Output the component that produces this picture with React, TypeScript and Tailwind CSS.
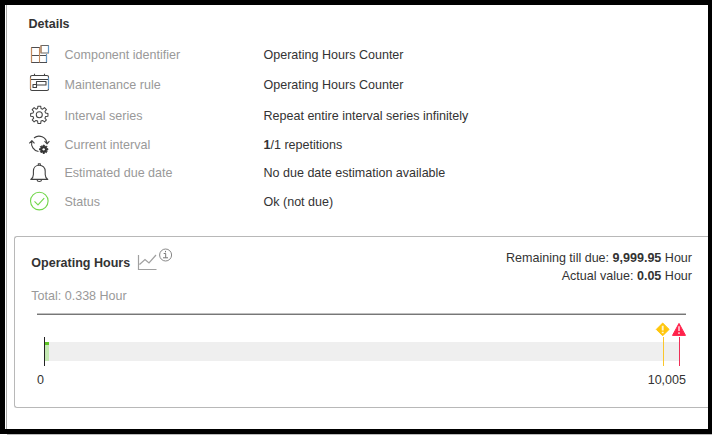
import type { ReactNode } from 'react';

const gearPath =
  'M8.2 3.3 8.5.8h3l.3 2.5 1.7.7 2-1.6 2.1 2.1L16 6.5l.7 1.7 2.5.3v3l-2.5.3-.7 1.7 1.6 2-2.1 2.1-2-1.6-1.7.7-.3 2.5h-3l-.3-2.5-1.7-.7-2 1.6-2.1-2.1L4 13.5l-.7-1.7-2.5-.3v-3l2.5-.3L4 6.5l-1.6-2 2.1-2.1 2 1.6z';

function Icon({ children, color = '#424242' }: { children: ReactNode; color?: string }) {
  return (
    <svg width="20" height="20" viewBox="0 0 20 20" fill="none" stroke={color} strokeWidth="1.1" strokeLinejoin="round" className="shrink-0 overflow-visible">
      {children}
    </svg>
  );
}

const ComponentIcon = () => (
  <Icon>
    <path d="M10 2.500H1.500v15h15V9.500M1.500 10.500h15" stroke="#4c4c50" />
    <path d="M9.500 2.500v15" stroke="#c58a5c" />
    <path d="M1.500 2.500v15" stroke="#c58a5c" />
    <path d="M16.500 9v8" stroke="#6198c8" />
    <path d="M11 .5h7.500v7.500H11z" fill="#fff" stroke="#666" />
    <path d="M11 .5V8" stroke="#c58a5c" />
    <path d="M18.500.5V8" stroke="#6198c8" />
  </Icon>
);

const CalendarIcon = () => (
  <Icon>
    <rect x="0.500" y="2.500" width="18" height="15" rx="1.500" />
    <path d="M.5 6.500h18M4.500.8v1.700M14.500.8v1.700M3 11.500h3.500v3H3zM6.500 11.500V8.500H16v3.500H6.500" />
    <path d="M.5 4.500v11.500" stroke="#c58a5c" />
    <path d="M18.500 4.500v11.500" stroke="#6198c8" />
  </Icon>
);

const GearIcon = () => (
  <Icon>
    <g transform="translate(-.1 .4) scale(.94)">
      <path d={gearPath} />
      <circle cx="10" cy="10" r="3.200" />
    </g>
  </Icon>
);

const CycleIcon = () => (
  <Icon>
    <path d="M4 3A8 8 0 0 1 17 8.500M14.500 6.200l2.600 2.700 2.300-2.700M8.500 16.500A8 8 0 0 1 1.900 6.300M-.7 8.300l2.600-2.600 2.600 2.600" />
    <g transform="translate(9.200 9.800) scale(.45)" stroke="#333">
      <path d={gearPath} fill="#333" strokeWidth="2" />
      <circle cx="10" cy="10" r="2.600" fill="#fff" stroke="none" />
    </g>
  </Icon>
);

const BellIcon = () => (
  <Icon>
    <path d="M.8 16.400c2-1.500 2.600-2.400 2.600-5V8.200c0-3.500 2.400-6 5.900-6s5.900 2.500 5.900 6v3.200c0 2.600.6 3.500 2.600 5z" />
    <path d="M8.300 2.200V.8h2v1.400M7 16.700c.2 2.400 4.400 2.400 4.600 0" />
  </Icon>
);

const CheckIcon = () => (
  <Icon color="#72d64b">
    <circle cx="9.300" cy="10.100" r="8.800" />
    <path d="m4.500 10.400 3.500 3.500 6.200-6.800" />
  </Icon>
);

type Row = { icon: ReactNode; label: string; value: ReactNode; box: string; nudge: string };

const rows: Row[] = [
  { icon: <ComponentIcon />, label: 'Component identifier', value: 'Operating Hours Counter', box: 'h-[30px]', nudge: 'mb-0' },
  { icon: <CalendarIcon />, label: 'Maintenance rule', value: 'Operating Hours Counter', box: 'h-[30px]', nudge: 'mb-[4px]' },
  { icon: <GearIcon />, label: 'Interval series', value: 'Repeat entire interval series infinitely', box: 'h-[31px]', nudge: 'mb-[1px]' },
  { icon: <CycleIcon />, label: 'Current interval', value: <><b>1</b>/1 repetitions</>, box: 'h-[28px]', nudge: 'mb-0' },
  { icon: <BellIcon />, label: 'Estimated due date', value: 'No due date estimation available', box: 'h-[28px]', nudge: 'mb-0' },
  { icon: <CheckIcon />, label: 'Status', value: 'Ok (not due)', box: 'h-[30px]', nudge: 'mb-[2px]' },
];

function Details() {
  return (
    <section className="pl-[21.5px] pt-[10px]">
      <h2 className="h-[25px] leading-[18px] font-bold">Details</h2>
      {rows.map((r) => (
        <div key={r.label} className={`flex items-center ${r.box}`}>
          <div className={`w-[36px] pl-[1.5px] ${r.nudge}`}>{r.icon}</div>
          <div className="w-[199px] text-[#999]">{r.label}</div>
          <div>{r.value}</div>
        </div>
      ))}
    </section>
  );
}

function Gauge() {
  return (
    <div className="relative ml-[22px] h-[74px] w-[649px] border-t border-[#c0c0c0]">
      <div className="h-px bg-[#777]" />
      <div className="absolute top-[28px] left-[7px] h-[19px] w-[635px] bg-[#efefef]">
        <div className="h-full w-[5px] border-t-[3px] border-[#5cc323] bg-[#c5e9b4]" />
      </div>
      <div className="absolute top-[23px] left-[7px] h-[29px] w-px bg-[#222]" />
      <div className="absolute top-[23px] left-[626px] h-[29px] w-px bg-[#fac62c]" />
      <div className="absolute top-[23px] left-[642px] h-[29px] w-px bg-[#ee3058]" />
      <svg className="absolute top-[8px] left-[618px]" width="32" height="16" viewBox="0 0 32 16">
        <path d="m7.700 1 6.400 6.400-6.400 6.400-6.400-6.400z" fill="#ffc60a" stroke="#ffc60a" strokeLinejoin="round" />
        <path d="M7.700 3.800v4.700M7.700 9.700v1.600" stroke="#fff4d0" strokeWidth="1.900" />
        <path d="m24 1.400 6.500 12H17.500z" fill="#ff234b" stroke="#ff234b" strokeLinejoin="round" />
        <path d="M24 4.300V9M24 10.200V12" stroke="#ffb3c0" strokeWidth="1.900" />
      </svg>
      <div className="absolute top-[57px] left-0 leading-[18px]">0</div>
      <div className="absolute top-[57px] right-0 leading-[18px]">10,005</div>
    </div>
  );
}

function OperatingHours() {
  return (
    <section className="ml-[7px] mt-[19px] h-[172px] rounded-l-[3px] border border-r-0 border-[#b8b8b8]">
      <div className="flex h-[76px] justify-between pr-[16px] pl-[16.3px]">
        <div>
          <div className="flex pt-[12px]">
            <h3 className="w-[99.7px] pt-[5px] leading-[18px] font-bold whitespace-nowrap">Operating Hours</h3>
            <svg className="ml-[7px] h-[24px] w-[36px] overflow-visible" viewBox="0 0 36 24" fill="none" stroke="#a0a0a0">
              <path d="M.5 6v14.500H18.500M1.500 15.500l5.500-5 4 3.500L18 6" strokeWidth="1.200" />
              <circle cx="27.600" cy="6" r="6" stroke="#888" />
              <path d="M25.700 4.500h2v4.300M25 8.800h5M27.500 1.900v1.400" stroke="#777" />
            </svg>
          </div>
          <div className="mt-[14px] leading-[18px] text-[#999]">Total: 0.338 Hour</div>
        </div>
        <div className="pt-[12px] text-right leading-[18px]">
          <div>Remaining till due: <b>9,999.95</b> Hour</div>
          <div>Actual value: <b>0.05</b> Hour</div>
        </div>
      </div>
      <Gauge />
    </section>
  );
}

export default function App() {
  return (
    <div className="h-[436px] w-[712px] overflow-hidden bg-white font-['Liberation_Sans',Arial,sans-serif] text-[12.54px] leading-[18px] text-[#333]">
      <div className="h-[434px] border-t-[5px] border-r-[4px] border-b-[5px] border-l-[5px] border-black pl-px">
        <main className="h-full border-l border-[#aaa]">
          <Details />
          <OperatingHours />
        </main>
      </div>
      <div className="ml-[7px] h-px bg-[#bbb]" />
    </div>
  );
}
